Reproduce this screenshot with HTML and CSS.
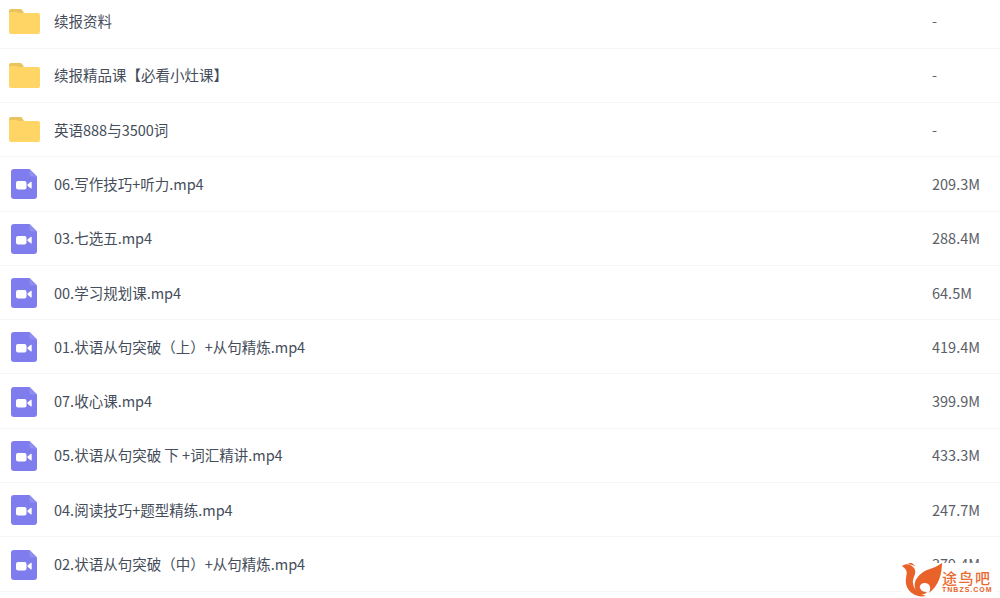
FILE: index.html
```html
<!DOCTYPE html>
<html lang="zh">
<head>
    <meta charset="UTF-8">
    <meta name="viewport" content="width=device-width, initial-scale=1.0">
    <title>文件列表</title>
    <link rel="stylesheet" href="styles.css">
</head>
<body>
    <svg class="icon-defs" width="0" height="0">
        <symbol id="folder" viewBox="0 0 31 25">
            <path d="M0 2a2 2 0 0 1 2-2h9.500a2 2 0 0 1 1.500.7L15 4H0z" fill="#e9c45c"/>
            <path d="M0 5.500a2 2 0 0 1 2-2.500h5l3 1h19a2 2 0 0 1 2 2V23a2 2 0 0 1-2 2H2a2 2 0 0 1-2-2z" fill="#ffd566"/>
        </symbol>
        <symbol id="video" viewBox="0 0 26 30">
            <path d="M3 0h15.500L26 7.500V27a3 3 0 0 1-3 3H3a3 3 0 0 1-3-3V3a3 3 0 0 1 3-3z" fill="#7f7cee"/>
            <path d="M18.500 0L26 7.500h-5.500a2 2 0 0 1-2-2z" fill="#918ef2"/>
            <rect x="5" y="12" width="10.500" height="8.500" rx="2" fill="#fff"/>
            <path d="M16.500 15.500l3.400-2.700a.5.500 0 0 1 .8.400v5.800a.5.500 0 0 1-.8.400l-3.400-2.600z" fill="#fff"/>
        </symbol>
    </svg>

    <div class="file-list">
        <div class="file-row">
            <svg class="file-icon folder-icon"><use href="#folder"/></svg>
            <span class="file-name">续报资料</span>
            <span class="file-size">-</span>
        </div>
        <div class="file-row">
            <svg class="file-icon folder-icon"><use href="#folder"/></svg>
            <span class="file-name">续报精品课【必看小灶课】</span>
            <span class="file-size">-</span>
        </div>
        <div class="file-row">
            <svg class="file-icon folder-icon"><use href="#folder"/></svg>
            <span class="file-name">英语888与3500词</span>
            <span class="file-size">-</span>
        </div>
        <div class="file-row">
            <svg class="file-icon video-icon"><use href="#video"/></svg>
            <span class="file-name">06.写作技巧+听力.mp4</span>
            <span class="file-size">209.3M</span>
        </div>
        <div class="file-row">
            <svg class="file-icon video-icon"><use href="#video"/></svg>
            <span class="file-name">03.七选五.mp4</span>
            <span class="file-size">288.4M</span>
        </div>
        <div class="file-row">
            <svg class="file-icon video-icon"><use href="#video"/></svg>
            <span class="file-name">00.学习规划课.mp4</span>
            <span class="file-size">64.5M</span>
        </div>
        <div class="file-row">
            <svg class="file-icon video-icon"><use href="#video"/></svg>
            <span class="file-name">01.状语从句突破（上）+从句精炼.mp4</span>
            <span class="file-size">419.4M</span>
        </div>
        <div class="file-row">
            <svg class="file-icon video-icon"><use href="#video"/></svg>
            <span class="file-name">07.收心课.mp4</span>
            <span class="file-size">399.9M</span>
        </div>
        <div class="file-row">
            <svg class="file-icon video-icon"><use href="#video"/></svg>
            <span class="file-name">05.状语从句突破 下 +词汇精讲.mp4</span>
            <span class="file-size">433.3M</span>
        </div>
        <div class="file-row">
            <svg class="file-icon video-icon"><use href="#video"/></svg>
            <span class="file-name">04.阅读技巧+题型精练.mp4</span>
            <span class="file-size">247.7M</span>
        </div>
        <div class="file-row">
            <svg class="file-icon video-icon"><use href="#video"/></svg>
            <span class="file-name">02.状语从句突破（中）+从句精炼.mp4</span>
            <span class="file-size">379.4M</span>
        </div>
    </div>

    <!-- 水印 -->
    <div class="watermark">
        <svg class="watermark-logo" viewBox="0 0 42 34">
            <path d="M0 3C4 0 9 1 12 5C15 9 12 13 11 17C10 23 14 30 24 33C15 35 6 30 4 21C3 15 6 10 4 7C3 5 1 4 0 3z" fill="#e8622a"/>
            <path d="M6 1C8 -1 11 0 13 3C10 2 8 1 6 1z" fill="#e8622a"/>
            <path d="M40 0C40 10 37 23 27 30C30 24 27 20 23 20C20 20 17 22 18 25C19 28 22 29 25 29C22 33 15 32 13 25C11 17 18 10 25 7C31 5 36 3 40 0z" fill="#e8622a"/>
        </svg>
        <div class="watermark-text">
            <div class="watermark-name">途鸟吧</div>
            <div class="watermark-url">TNBZS.COM</div>
        </div>
    </div>
</body>
</html>
```

FILE: styles.css
```css
body {
    font-family: "Noto Sans CJK SC", "Noto Sans", sans-serif;
    margin: 0;
    background-color: #fff;
    overflow: hidden;
    height: 598px;
    position: relative;
}
.icon-defs {
    position: absolute;
}
.file-list {
    margin-top: -5.6px;
}
.file-row {
    display: flex;
    align-items: center;
    box-sizing: border-box;
    height: 54.3px;
    padding-left: 9px;
    border-bottom: 1px solid #f5f5f6;
    font-size: 14.5px;
    color: #454d5a;
}
.file-icon {
    flex: none;
}
.folder-icon {
    width: 31px;
    height: 25px;
    margin-right: 14px;
}
.video-icon {
    width: 26px;
    height: 30px;
    margin-top: 1px;
    margin-left: 2px;
    margin-right: 17px;
}
.file-name {
    flex: 1;
    padding-bottom: 1px;
}
.file-size {
    width: 68px;
    padding-bottom: 1px;
    color: #5a6068;
}

/* 水印 */
.watermark {
    position: absolute;
    left: 902px;
    top: 563px;
    width: 94px;
    height: 34px;
    display: flex;
    align-items: flex-end;
    background: #fff;
}
.watermark-logo {
    flex: none;
    width: 42px;
    height: 34px;
}
.watermark-text {
    margin-left: -2px;
    margin-bottom: 4px;
}
.watermark-name {
    font-size: 15px;
    line-height: 16px;
    letter-spacing: 1.5px;
    color: #ea6a30;
    font-weight: 500;
}
.watermark-url {
    font-family: "Liberation Sans", sans-serif;
    font-size: 7px;
    line-height: 7px;
    letter-spacing: 1px;
    font-weight: 700;
    color: #e8622a;
}
```
